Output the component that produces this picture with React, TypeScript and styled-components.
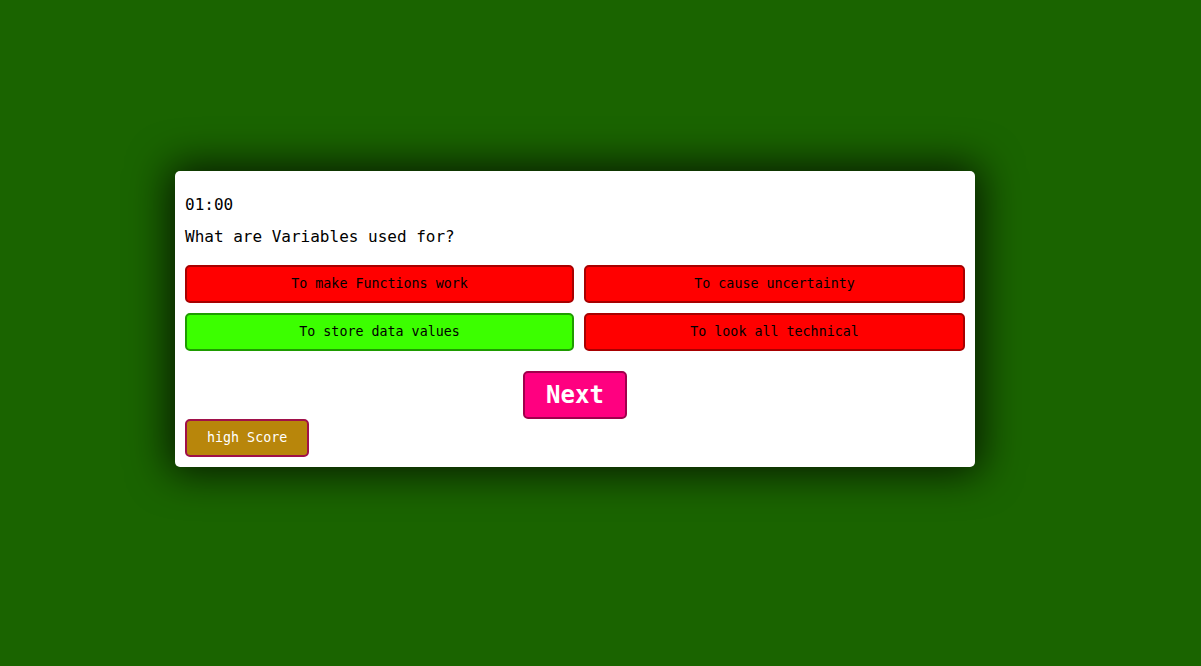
import React from "react";
import styled, { createGlobalStyle } from "styled-components";

const Global = createGlobalStyle`
  html, body { margin: 0; padding: 0; }
  body {
    background: #1a6400;
    font-family: "DejaVu Sans Mono", monospace;
    min-height: 100vh;
  }
`;

const Page = styled.div`
  min-height: 100vh;
  box-sizing: border-box;
  padding: 171px 0 0 175px;
`;

const Card = styled.div`
  width: 800px;
  box-sizing: border-box;
  background: #fff;
  border-radius: 5px;
  padding: 24px 10px 10px;
  box-shadow: 0 0 40px 6px rgba(0, 0, 0, 0.75);
  display: flex;
  flex-direction: column;
`;

const Timer = styled.div`
  font-size: 16px;
  color: #000;
  line-height: 19px;
`;

const Question = styled.div`
  font-size: 16px;
  color: #000;
  line-height: 19px;
  margin-top: 13px;
`;

const Answers = styled.div`
  display: grid;
  grid-template-columns: repeat(2, auto);
  gap: 10px;
  margin-top: 19px;
`;

const Answer = styled.button<{ $correct?: boolean }>`
  font-family: "DejaVu Sans Mono", monospace;
  font-size: 13.33px;
  line-height: 16px;
  color: #000;
  padding: 9px 10px;
  border-radius: 5px;
  border: 2px solid ${(p) => (p.$correct ? "#1e9c00" : "#a80000")};
  background: ${(p) => (p.$correct ? "#3cff00" : "#ff0000")};
  text-align: center;
`;

const Controls = styled.div`
  display: flex;
  justify-content: center;
  margin-top: 20px;
`;

const NextButton = styled.button`
  font-family: "DejaVu Sans Mono", monospace;
  font-weight: bold;
  font-size: 24px;
  line-height: 28px;
  color: #fff;
  background: #ff0080;
  border: 2px solid #a0004c;
  border-radius: 5px;
  padding: 8px 21px;
  width: 104px;
`;

const Footer = styled.div`
  display: flex;
`;

const HighScore = styled.button`
  font-family: "DejaVu Sans Mono", monospace;
  font-size: 13.33px;
  line-height: 16px;
  color: #fff;
  background: #b8860b;
  border: 2px solid #a0104a;
  border-radius: 5px;
  padding: 9px 20px;
  width: 124px;
  white-space: nowrap;
`;

const answers = [
  { text: "To make Functions work" },
  { text: "To cause uncertainty" },
  { text: "To store data values", correct: true },
  { text: "To look all technical" },
];

export default function App() {
  return (
    <>
      <Global />
      <Page>
        <Card>
          <Timer>01:00</Timer>
          <Question>What are Variables used for?</Question>
          <Answers>
            {answers.map((a) => (
              <Answer key={a.text} $correct={a.correct}>
                {a.text}
              </Answer>
            ))}
          </Answers>
          <Controls>
            <NextButton>Next</NextButton>
          </Controls>
          <Footer>
            <HighScore>high Score</HighScore>
          </Footer>
        </Card>
      </Page>
    </>
  );
}
